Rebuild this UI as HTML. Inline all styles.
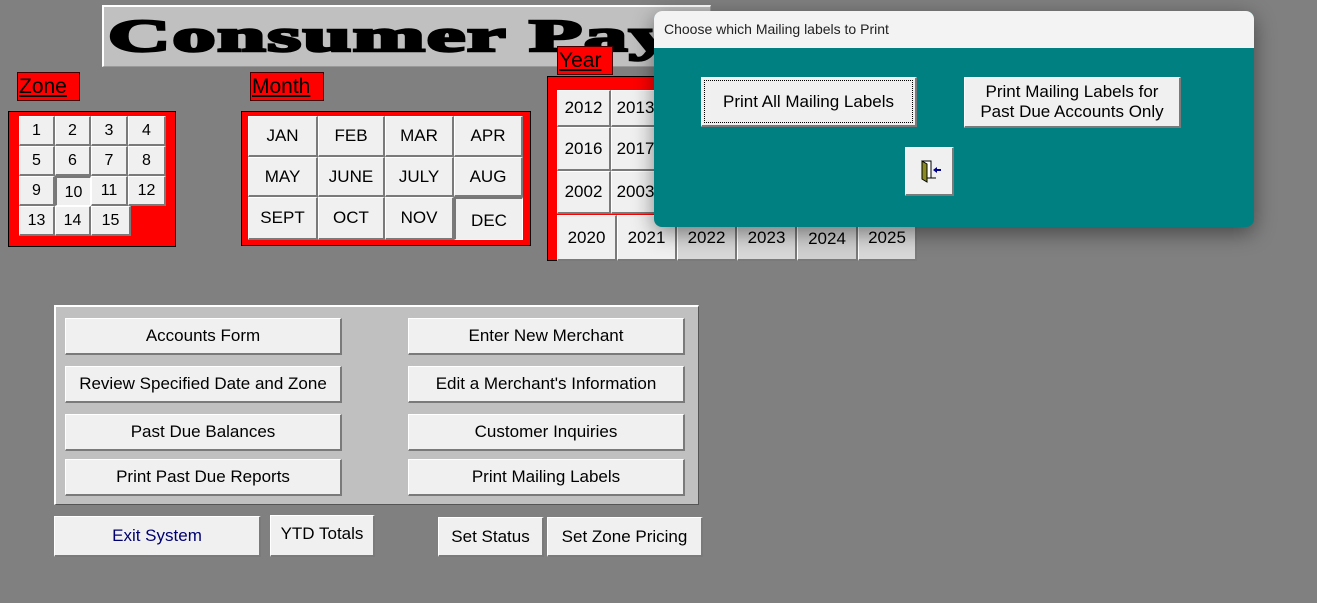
<!DOCTYPE html>
<html><head><meta charset="utf-8"><style>
*{box-sizing:border-box;margin:0;padding:0}
body{width:1317px;height:603px;background:#808080;position:relative;overflow:hidden;font-family:"Liberation Sans",Arial,sans-serif;color:#000}
.a{position:absolute}
.b{position:absolute;background:#f0f0f0;border-top:1px solid #fff;border-left:1px solid #fff;border-right:2px solid #7a7a7a;border-bottom:2px solid #7a7a7a;display:flex;align-items:center;justify-content:center;text-align:center;font-size:17px;line-height:20px}
.red{position:absolute;background:#f00;border:1px solid #000}
.lbl{position:absolute;background:#f00;border:1px solid #400;font-size:21px;text-decoration:underline;padding-left:1px;line-height:27px}
.z{font-size:16px}
</style></head><body>
<div class="a" style="left:102px;top:5px;width:609px;height:62px;background:#c0c0c0;border-top:2px solid #fff;border-left:2px solid #fff;border-right:1px solid #999;border-bottom:1px solid #999;overflow:hidden">
<div class="a" style="left:4px;top:4px;line-height:50px;font-family:'Liberation Serif',serif;font-weight:bold;font-size:45px;letter-spacing:1px;transform:scaleX(1.92);transform-origin:left;white-space:nowrap;-webkit-text-stroke:2.5px #000">Consumer Pay</div></div>

<div class="lbl" style="left:17px;top:72px;width:63px;height:29px">Zone</div>
<div class="red" style="left:8px;top:111px;width:168px;height:136px"></div>
<div class="b z" style="left:19px;top:116px;width:36px;height:30px">1</div>
<div class="b z" style="left:55px;top:116px;width:36px;height:30px">2</div>
<div class="b z" style="left:91px;top:116px;width:37px;height:30px">3</div>
<div class="b z" style="left:128px;top:116px;width:38px;height:30px">4</div>
<div class="b z" style="left:19px;top:146px;width:36px;height:30px">5</div>
<div class="b z" style="left:55px;top:146px;width:36px;height:30px">6</div>
<div class="b z" style="left:91px;top:146px;width:37px;height:30px">7</div>
<div class="b z" style="left:128px;top:146px;width:38px;height:30px">8</div>
<div class="b z" style="left:19px;top:176px;width:36px;height:30px">9</div>
<div class="b z" style="left:55px;top:176px;width:36px;height:30px;border-top:2px solid #777;border-left:2px solid #777;border-right:1px solid #fff;border-bottom:1px solid #fff;padding-top:3px">10</div>
<div class="b z" style="left:91px;top:176px;width:37px;height:30px">11</div>
<div class="b z" style="left:128px;top:176px;width:38px;height:30px">12</div>
<div class="b z" style="left:19px;top:206px;width:36px;height:30px">13</div>
<div class="b z" style="left:55px;top:206px;width:36px;height:30px">14</div>
<div class="b z" style="left:91px;top:206px;width:40px;height:30px">15</div>

<div class="lbl" style="left:250px;top:72px;width:74px;height:29px">Month</div>
<div class="red" style="left:241px;top:111px;width:290px;height:135px"></div>
<div class="b" style="left:248px;top:116px;width:70px;height:41px">JAN</div>
<div class="b" style="left:318px;top:116px;width:67px;height:41px">FEB</div>
<div class="b" style="left:385px;top:116px;width:69px;height:41px">MAR</div>
<div class="b" style="left:454px;top:116px;width:69px;height:41px">APR</div>
<div class="b" style="left:248px;top:157px;width:70px;height:40px">MAY</div>
<div class="b" style="left:318px;top:157px;width:67px;height:40px">JUNE</div>
<div class="b" style="left:385px;top:157px;width:69px;height:40px">JULY</div>
<div class="b" style="left:454px;top:157px;width:69px;height:40px">AUG</div>
<div class="b" style="left:248px;top:197px;width:70px;height:43px">SEPT</div>
<div class="b" style="left:318px;top:197px;width:67px;height:43px">OCT</div>
<div class="b" style="left:385px;top:197px;width:69px;height:43px">NOV</div>
<div class="b" style="left:454px;top:197px;width:69px;height:43px;border-top:2px solid #777;border-left:2px solid #777;border-right:1px solid #fff;border-bottom:1px solid #fff;padding-top:3px">DEC</div>

<div class="lbl" style="left:557px;top:46px;width:56px;height:29px">Year</div>
<div class="red" style="left:547px;top:76px;width:120px;height:185px"></div>
<div class="b" style="left:557px;top:90px;width:54px;height:37px">2012</div>
<div class="b" style="left:611px;top:90px;width:50px;height:37px">2013</div>
<div class="b" style="left:557px;top:127px;width:54px;height:44px">2016</div>
<div class="b" style="left:611px;top:127px;width:50px;height:44px">2017</div>
<div class="b" style="left:557px;top:171px;width:54px;height:43px">2002</div>
<div class="b" style="left:611px;top:171px;width:50px;height:43px">2003</div>
<div class="b" style="left:557px;top:215px;width:60px;height:46px">2020</div>
<div class="b" style="left:617px;top:215px;width:60px;height:46px">2021</div>
<div class="b" style="left:677px;top:215px;width:60px;height:46px;background:#d8d8d8">2022</div>
<div class="b" style="left:737px;top:215px;width:60px;height:46px;background:#d8d8d8">2023</div>
<div class="b" style="left:797px;top:215px;width:61px;height:46px;background:#d0d0d0;padding-top:3px">2024</div>
<div class="b" style="left:858px;top:215px;width:59px;height:46px;background:#d8d8d8">2025</div>

<div class="a" style="left:654px;top:11px;width:600px;height:216px;border-radius:8px;overflow:hidden;background:#008080;box-shadow:0 6px 22px rgba(0,0,0,.45)">
<div class="a" style="left:0;top:0;width:600px;height:37px;background:#f3f3f3;font-size:14px;padding:10px 0 0 10px;color:#222">Choose which Mailing labels to Print</div>
<div class="b" style="left:47px;top:66px;width:216px;height:50px"><div style="border:1px dotted #000;position:absolute;left:2px;top:2px;right:2px;bottom:2px"></div>Print All Mailing Labels</div>
<div class="b" style="left:310px;top:66px;width:217px;height:51px">Print Mailing Labels for<br>Past Due Accounts Only</div>
<div class="b" style="left:251px;top:136px;width:49px;height:49px">
<svg width="26" height="26" viewBox="0 0 26 26"><rect x="6" y="3" width="9" height="17" fill="#fff" stroke="#000"/><path d="M6 3 L11 6 L11 24 L6 21 Z" fill="#8a8a20" stroke="#000"/><path d="M12 20 H20" stroke="#000"/><path d="M17 12 L21 9 V11 H25 V13 H21 V15 Z" fill="#00008b"/></svg></div>
</div>

<div class="a" style="left:54px;top:305px;width:645px;height:200px;background:#c0c0c0;border-top:2px solid #fff;border-left:2px solid #fff;border-right:1px solid #555;border-bottom:1px solid #555"></div>
<div class="b" style="left:65px;top:318px;width:277px;height:37px">Accounts Form</div>
<div class="b" style="left:408px;top:318px;width:277px;height:37px">Enter New Merchant</div>
<div class="b" style="left:65px;top:366px;width:277px;height:37px">Review Specified Date and Zone</div>
<div class="b" style="left:408px;top:366px;width:277px;height:37px">Edit a Merchant's Information</div>
<div class="b" style="left:65px;top:414px;width:277px;height:37px">Past Due Balances</div>
<div class="b" style="left:408px;top:414px;width:277px;height:37px">Customer Inquiries</div>
<div class="b" style="left:65px;top:459px;width:277px;height:37px">Print Past Due Reports</div>
<div class="b" style="left:408px;top:459px;width:277px;height:37px">Print Mailing Labels</div>

<div class="b" style="left:54px;top:516px;width:207px;height:41px;color:#000070">Exit System</div>
<div class="b" style="left:270px;top:515px;width:105px;height:42px;padding-bottom:4px">YTD Totals</div>
<div class="b" style="left:438px;top:517px;width:106px;height:40px">Set Status</div>
<div class="b" style="left:547px;top:517px;width:156px;height:40px">Set Zone Pricing</div>
</body></html>
